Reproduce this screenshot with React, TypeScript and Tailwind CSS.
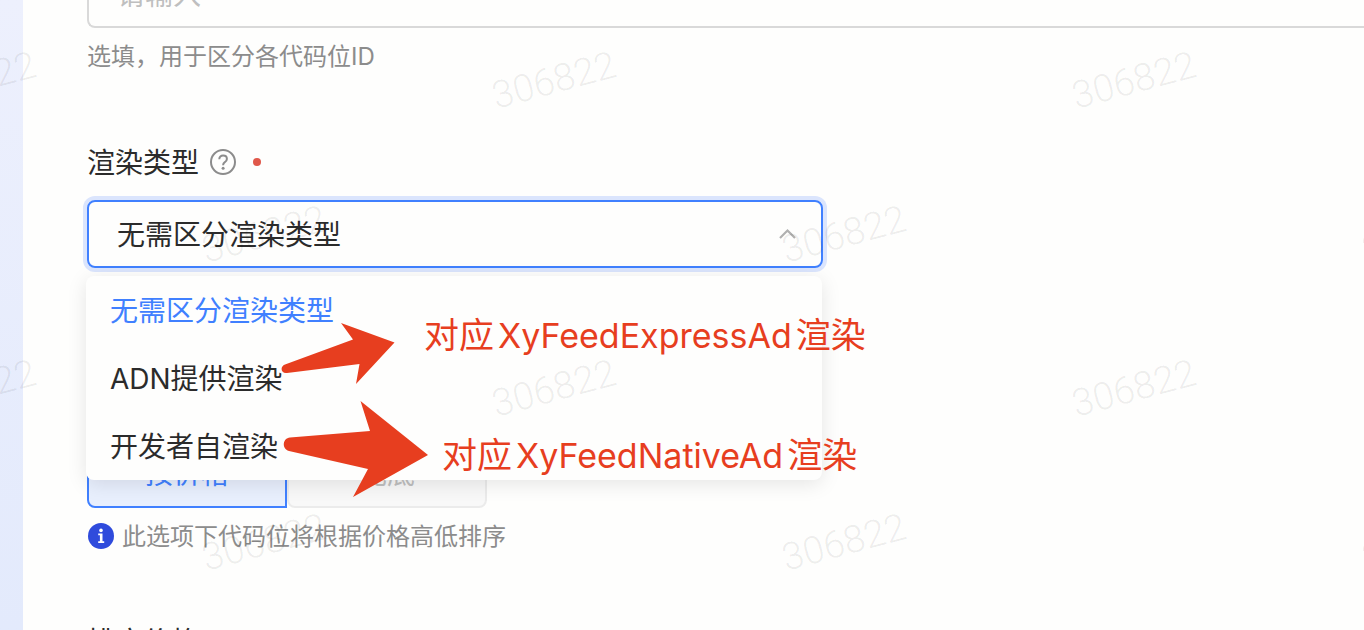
import { useState } from "react"
import clsx from "clsx"

const renderTypes = ["无需区分渲染类型", "ADN提供渲染", "开发者自渲染"]

// the stamp repeats in two interleaved grids
const stamps = [
    { x: -90, y: 56 },
    { x: 490, y: 56 },
    { x: 1070, y: 56 },
    { x: 200, y: 210 },
    { x: 780, y: 210 },
    { x: 1360, y: 210 },
    { x: -90, y: 364 },
    { x: 490, y: 364 },
    { x: 1070, y: 364 },
    { x: 200, y: 518 },
    { x: 780, y: 518 },
    { x: 1360, y: 518 },
]

function Watermark() {
    return (
        <div aria-hidden="true" className="pointer-events-none absolute inset-0 z-30 overflow-hidden">
            {stamps.map((s) => (
                <span
                    key={`${s.x}-${s.y}`}
                    className="absolute w-32 -rotate-15 text-center font-['Roboto',sans-serif] text-[38px] leading-12 font-light text-black/7"
                    style={{ left: s.x, top: s.y }}
                >
                    306822
                </span>
            ))}
        </div>
    )
}

function HelpIcon() {
    return (
        <svg className="size-[26px]" viewBox="0 0 26 26" fill="none" stroke="#8c8c8c" strokeWidth="2">
            <circle cx="13" cy="13" r="12" />
            <path d="M9.300 10.200c0-2.200 1.600-3.600 3.800-3.600s3.800 1.400 3.800 3.400c0 1.500-.9 2.300-2.100 3.200-1.200.8-1.700 1.400-1.700 3" />
            <circle cx="13.100" cy="19.200" r="1.500" fill="#8c8c8c" stroke="none" />
        </svg>
    )
}

function InfoIcon() {
    return (
        <svg className="size-[26px]" viewBox="0 0 26 26">
            <circle cx="13" cy="13" r="13" fill="#2f4bdc" />
            <circle cx="13" cy="7.400" r="1.800" fill="#fff" />
            <path d="M10.200 10.600h4.300v7.700h1.700v1.700h-6v-1.700h1.700v-6h-1.700z" fill="#fff" />
        </svg>
    )
}

function Arrows() {
    return (
        <svg className="absolute top-[120px] left-[194px] h-[180px] w-[148px]" viewBox="281 320 148 180" fill="#e73e1f">
            <path d="M285 364.500L353 339.500L341 323L394.500 342.500L356 384L359.500 364L287 373C281 374 279.500 366.500 285 364.500Z" />
            <path d="M290 437.500L370 431L360.500 401L428 455L353 497L368 469L289 451C281.500 449 282.500 438 290 437.500Z" />
        </svg>
    )
}

export default function App() {
    const [type, setType] = useState(renderTypes[0])
    const [sort, setSort] = useState("price")

    return (
        <div className="relative flex h-screen overflow-hidden bg-[#fefefd] font-['Inter','Noto_Sans_CJK_SC',sans-serif] text-[28px] text-[#2b2b2b]">
            <div className="w-[23px] shrink-0 bg-linear-to-b from-[#edf0fd] to-[#e3eafc]" />

            <main className="-mt-10 min-w-0 flex-1 pl-16">
                <input
                    aria-label="代码位名称"
                    placeholder="请输入"
                    className="block h-17 w-full rounded-l-lg border-2 border-r-0 border-[#d9d9d9] px-7 pt-0.5 outline-none placeholder:text-[#bfbfbf]"
                />
                <p className="mt-2 pt-px text-2xl leading-10 text-[#8c8c8c]">选填，用于区分各代码位ID</p>

                <div className="mt-[65px] flex h-10 items-center">
                    <label htmlFor="render-type" className="pt-0.5">渲染类型</label>
                    <span className="ml-[11px]"><HelpIcon /></span>
                    <span className="ml-[17px] size-2 rounded-full bg-[#e0584a]" />
                </div>

                <div className="relative mt-[18px] w-[736px]">
                    <select
                        id="render-type"
                        value={type}
                        onChange={(e) => setType(e.target.value)}
                        className="block h-17 w-full appearance-none rounded-lg border-2 border-[#4080ff] px-7 pt-0.5 ring-4 ring-[#dbe5fd] outline-none"
                    >
                        {renderTypes.map((t) => <option key={t}>{t}</option>)}
                    </select>
                    <svg className="pointer-events-none absolute top-7 right-6 h-3 w-5" viewBox="0 0 20 12" fill="none" stroke="#b0b0b0" strokeWidth="2.200">
                        <path d="M1 10L8.500 2.500L16 10" />
                    </svg>

                    <ul className="absolute top-[76px] -left-px z-10 w-full rounded-lg bg-[#fefefd] shadow-[0_4px_20px_rgba(0,0,0,0.1)]">
                        {renderTypes.map((t) => (
                            <li key={t}>
                                <button
                                    onClick={() => setType(t)}
                                    className={clsx("block h-17 w-full px-6 pt-0.5 text-left", t === type && "text-[#4080ff]")}
                                >
                                    {t}
                                </button>
                            </li>
                        ))}
                    </ul>

                    {/* notes on top of the menu */}
                    <div className="pointer-events-none absolute inset-0 z-20 text-[35px] leading-12 whitespace-nowrap text-[#e73e1f]">
                        <Arrows />
                        <p className="absolute top-[111px] left-[337px] flex items-baseline gap-1">
                            对应<span className="text-[34px]">XyFeedExpressAd</span>渲染
                        </p>
                        <p className="absolute top-[231px] left-[355px] flex items-baseline gap-1">
                            对应<span className="text-[34px]">XyFeedNativeAd</span>渲染
                        </p>
                    </div>
                </div>

                <div className="mt-[172px] flex">
                    <button
                        onClick={() => setSort("price")}
                        className={clsx("h-17 w-50 rounded-l-lg border-2", sort === "price" ? "border-[#4080ff] bg-[#e8effd] text-[#4080ff]" : "border-[#ebebeb] bg-[#f8f8f8] text-[#bfbfbf]")}
                    >
                        按价格
                    </button>
                    <button
                        onClick={() => setSort("bottom")}
                        className={clsx("h-17 w-50 rounded-lg border-2", sort === "bottom" ? "border-[#4080ff] bg-[#e8effd] text-[#4080ff]" : "border-[#ebebeb] bg-[#f8f8f8] text-[#bfbfbf]")}
                    >
                        兜底
                    </button>
                </div>
                <div className="mt-2 flex h-10 items-center gap-2 pl-px text-2xl leading-10 text-[#8c8c8c]">
                    <InfoIcon />
                    <p className="pt-0.5">此选项下代码位将根据价格高低排序</p>
                </div>

                <h3 className="mt-[66px] leading-10">排序价格</h3>
            </main>

            <Watermark />
        </div>
    )
}
